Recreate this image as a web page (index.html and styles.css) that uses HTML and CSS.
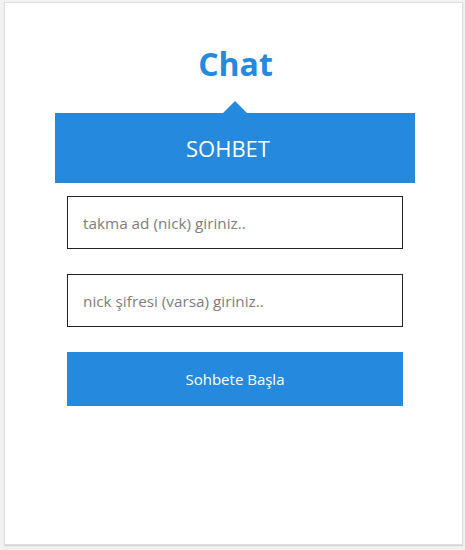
FILE: index.html
```html
<!DOCTYPE html>
<html lang="tr">
<head>
    <meta charset="UTF-8">
    <meta name="viewport" content="width=device-width, initial-scale=1.0">
    <title>Chat</title>
    <link rel="stylesheet" href="styles.css">
</head>
<body>
    <div class="card">
        <h1 class="title">Chat</h1>

        <div class="chatBox">
            <div class="chatHead">SOHBET</div>

            <form class="loginForm">
                <input type="text" class="field" placeholder="takma ad (nick) giriniz..">
                <input type="password" class="field" placeholder="nick şifresi (varsa) giriniz..">
                <button type="submit" class="startBtn">Sohbete Başla</button>
            </form>
        </div>
    </div>
</body>
</html>
```

FILE: styles.css
```css
/* Page */
body {
    font-family: "Open Sans", Arial, sans-serif;
    background-color: #f2f2f2;
    margin: 0;
    padding: 2px 2px 2px 4px;
}

.card {
    background-color: #fff;
    border: 1px solid #dedede;
    box-shadow: 0 1px 1px #d6d6d6;
    height: 543px;
    box-sizing: border-box;
    padding-top: 38px;
}

.title {
    color: #2589dd;
    font-size: 32px;
    font-weight: 700;
    text-align: center;
    line-height: 45px;
    margin: 0 0 27px 4px;
}

/* Blue box with the small arrow on top */
.chatBox {
    width: 360px;
    margin-left: 50px;
}

.chatHead {
    position: relative;
    background-color: #2589dd;
    color: #fff;
    font-size: 22px;
    height: 70px;
    line-height: 70px;
    text-align: center;
    padding-right: 14px;
}

.chatHead::before {
    content: "";
    position: absolute;
    top: -12px;
    left: 168px;
    border-left: 12px solid transparent;
    border-right: 12px solid transparent;
    border-bottom: 12px solid #2589dd;
}

/* Form */
.loginForm {
    display: flex;
    flex-direction: column;
    gap: 25px;
    padding: 13px 12px 0 12px;
}

.field {
    height: 53px;
    box-sizing: border-box;
    border: 1px solid #222;
    padding: 0 15px;
    font-family: "Open Sans", Arial, sans-serif;
    font-size: 15.3px;
    color: #555;
    outline: none;
}

.field::placeholder {
    color: #7d7d7d;
}

.startBtn {
    height: 54px;
    border: none;
    background-color: #2589dd;
    color: #fff;
    font-family: "Open Sans", Arial, sans-serif;
    font-size: 15px;
    cursor: pointer;
}
```
